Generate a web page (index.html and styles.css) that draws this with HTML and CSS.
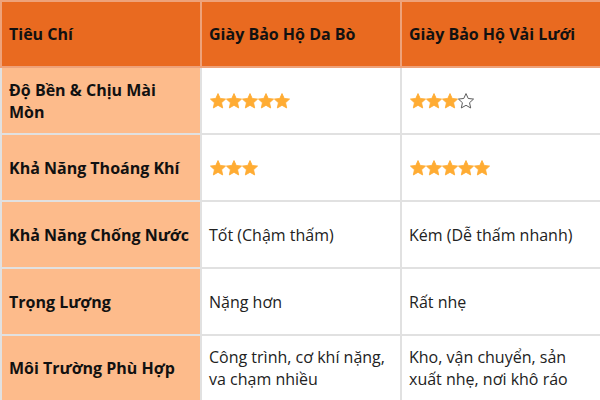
FILE: index.html
```html
<!DOCTYPE html>
<html lang="vi">
<head>
<meta charset="utf-8">
<link rel="stylesheet" href="styles.css">
</head>
<body>
<svg class="defs" width="0" height="0" aria-hidden="true">
  <defs>
    <polygon id="star" points="12,2 15,8.6 22.2,9.4 16.8,14.3 18.3,21.4 12,17.8 5.7,21.4 7.2,14.3 1.8,9.4 9,8.6"/>
  </defs>
</svg>
<table class="cmp">
  <colgroup>
    <col class="c">
    <col class="c">
    <col class="c">
  </colgroup>
  <thead>
    <tr class="head">
      <th>Tiêu Chí</th>
      <th>Giày Bảo Hộ Da Bò</th>
      <th>Giày Bảo Hộ Vải Lưới</th>
    </tr>
  </thead>
  <tbody>
    <tr class="row">
      <td class="crit">Độ Bền &amp; Chịu Mài Mòn</td>
      <td><span class="stars">
        <svg class="st" viewBox="1.2 1.2 21.6 21.6"><use href="#star"/></svg><svg class="st" viewBox="1.2 1.2 21.6 21.6"><use href="#star"/></svg><svg class="st" viewBox="1.2 1.2 21.6 21.6"><use href="#star"/></svg><svg class="st" viewBox="1.2 1.2 21.6 21.6"><use href="#star"/></svg><svg class="st" viewBox="1.2 1.2 21.6 21.6"><use href="#star"/></svg>
      </span></td>
      <td><span class="stars">
        <svg class="st" viewBox="1.2 1.2 21.6 21.6"><use href="#star"/></svg><svg class="st" viewBox="1.2 1.2 21.6 21.6"><use href="#star"/></svg><svg class="st" viewBox="1.2 1.2 21.6 21.6"><use href="#star"/></svg><svg class="st empty" viewBox="1.2 1.2 21.6 21.6"><use href="#star"/></svg>
      </span></td>
    </tr>
    <tr class="row">
      <td class="crit">Khả Năng Thoáng Khí</td>
      <td><span class="stars">
        <svg class="st" viewBox="1.2 1.2 21.6 21.6"><use href="#star"/></svg><svg class="st" viewBox="1.2 1.2 21.6 21.6"><use href="#star"/></svg><svg class="st" viewBox="1.2 1.2 21.6 21.6"><use href="#star"/></svg>
      </span></td>
      <td><span class="stars">
        <svg class="st" viewBox="1.2 1.2 21.6 21.6"><use href="#star"/></svg><svg class="st" viewBox="1.2 1.2 21.6 21.6"><use href="#star"/></svg><svg class="st" viewBox="1.2 1.2 21.6 21.6"><use href="#star"/></svg><svg class="st" viewBox="1.2 1.2 21.6 21.6"><use href="#star"/></svg><svg class="st" viewBox="1.2 1.2 21.6 21.6"><use href="#star"/></svg>
      </span></td>
    </tr>
    <tr class="row">
      <td class="crit">Khả Năng Chống Nước</td>
      <td>Tốt (Chậm thấm)</td>
      <td>Kém (Dễ thấm nhanh)</td>
    </tr>
    <tr class="row">
      <td class="crit">Trọng Lượng</td>
      <td>Nặng hơn</td>
      <td>Rất nhẹ</td>
    </tr>
    <tr class="row last">
      <td class="crit">Môi Trường Phù Hợp</td>
      <td>Công trình, cơ khí nặng, va chạm nhiều</td>
      <td>Kho, vận chuyển, sản xuất nhẹ, nơi khô ráo</td>
    </tr>
  </tbody>
</table>
</body>
</html>
```
FILE: styles.css
```css
html, body {
  margin: 0;
  padding: 0;
  background: #ffffff;
}
body {
  font-family: "Open Sans", "Noto Sans", sans-serif;
  font-size: 16px;
  color: #222222;
}
.defs {
  position: absolute;
  width: 0;
  height: 0;
  overflow: hidden;
}
.cmp {
  width: 600px;
  height: 400px;
  border-collapse: collapse;
  table-layout: fixed;
}
.cmp col.c {
  width: 200px;
}
.cmp th,
.cmp td {
  border: 2px solid #e1e1e1;
  padding: 0 7px;
  text-align: left;
  vertical-align: middle;
  line-height: 22px;
}
.head {
  height: 66px;
}
.head th {
  background: #e96a20;
  color: #111111;
  font-weight: 700;
  border-color: #eea27a;
}
.row {
  height: 67px;
}
.row.last {
  height: 66px;
}
.cmp td.crit {
  background: #fdbb8b;
  font-weight: 700;
  color: #111111;
}
.stars {
  display: flex;
  align-items: center;
  gap: 0;
  padding-left: 1px;
}
.st {
  width: 16px;
  height: 16px;
  display: block;
  fill: #ffac33;
  stroke: #ffac33;
  stroke-width: 1.2;
  stroke-linejoin: round;
}
.st.empty {
  fill: #ffffff;
  stroke: #555555;
  stroke-width: 1.3;
}
```
